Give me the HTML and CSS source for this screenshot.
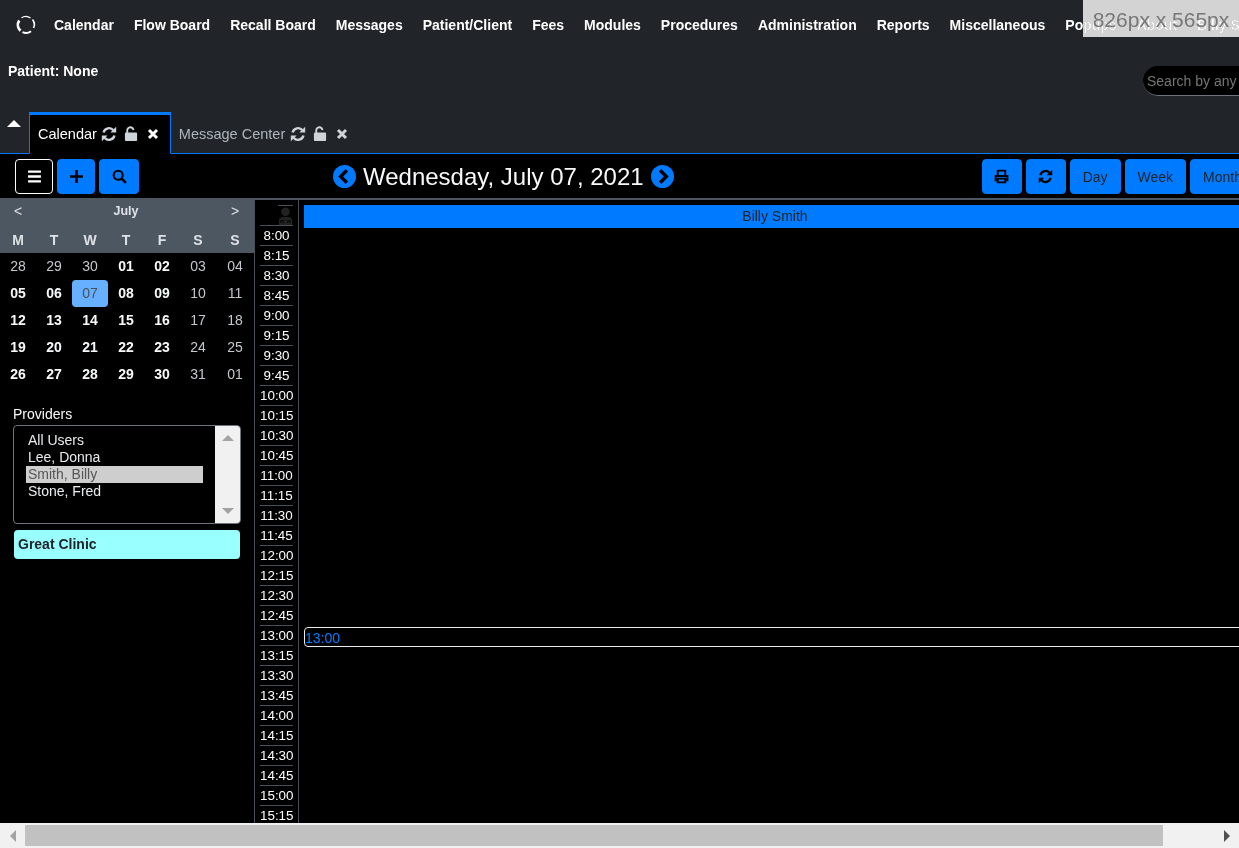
FILE: index.html
```html
<!DOCTYPE html>
<html lang="en">
<head>
  <meta charset="UTF-8" />
  <title>Calendar</title>
  <link rel="stylesheet" href="styles.css">
</head>
<body>
  <svg class="defs" width="0" height="0">
    <symbol id="i-sync" viewBox="0 0 16 16">
      <path d="M2.600 6.600A5.600 5.600 0 0 1 12.400 4.200" fill="none" stroke="currentColor" stroke-width="2.400"/>
      <path d="M15.200 0.800V6.600H9.400Z" fill="currentColor"/>
      <path d="M13.400 9.400A5.600 5.600 0 0 1 3.600 11.800" fill="none" stroke="currentColor" stroke-width="2.400"/>
      <path d="M0.800 15.200V9.400H6.600Z" fill="currentColor"/>
    </symbol>
    <symbol id="i-unlock" viewBox="0 0 14 16">
      <path d="M3 8V4.800A3.300 3.300 0 0 1 9.600 4.400" fill="none" stroke="currentColor" stroke-width="2"/>
      <rect x="0.500" y="7" width="13" height="9" rx="1.200" fill="currentColor"/>
    </symbol>
    <symbol id="i-close" viewBox="0 0 12 12">
      <path d="M2 2L10 10M10 2L2 10" fill="none" stroke="currentColor" stroke-width="3"/>
    </symbol>
    <symbol id="i-chev-left" viewBox="0 0 24 24">
      <circle cx="12" cy="12" r="12" fill="#007bff"/>
      <path d="M14.500 5.500L8 12l6.500 6.500" fill="none" stroke="#000" stroke-width="3.600"/>
    </symbol>
    <symbol id="i-chev-right" viewBox="0 0 24 24">
      <circle cx="12" cy="12" r="12" fill="#007bff"/>
      <path d="M9.500 5.500L16 12l-6.500 6.500" fill="none" stroke="#000" stroke-width="3.600"/>
    </symbol>
  </svg>

  <div class="app">
    <header class="topbar">
      <nav class="mainnav">
        <svg class="logo" viewBox="0 0 20 20">
          <path d="M3.200 5.600A8 8 0 0 0 4.500 15.800" fill="none" stroke="#fff" stroke-width="2.800"/>
          <path d="M6.500 17.200A8 8 0 0 0 15 16.200" fill="none" stroke="#fff" stroke-width="2"/>
          <path d="M17.500 13A8 8 0 0 0 16.500 4.500" fill="none" stroke="#fff" stroke-width="1.600"/>
          <path d="M14.500 3A8 8 0 0 0 5.500 2.800" fill="none" stroke="#fff" stroke-width="1.300"/>
        </svg>
        <a>Calendar</a>
        <a>Flow Board</a>
        <a>Recall Board</a>
        <a>Messages</a>
        <a>Patient/Client</a>
        <a>Fees</a>
        <a>Modules</a>
        <a>Procedures</a>
        <a>Administration</a>
        <a>Reports</a>
        <a>Miscellaneous</a>
        <a>Popups</a>
        <a>About</a>
        <a>Billy Smith</a>
      </nav>
      <div class="patientrow">
        <span class="patient">Patient: None</span>
        <input class="search" type="text" placeholder="Search by any demographics">
      </div>
      <div class="tabs">
        <span class="collapse"></span>
        <div class="tab active">
          <span>Calendar</span>
          <svg class="ic sync"><use href="#i-sync"/></svg>
          <svg class="ic lock"><use href="#i-unlock"/></svg>
          <svg class="ic close"><use href="#i-close"/></svg>
        </div>
        <div class="tab">
          <span>Message Center</span>
          <svg class="ic sync"><use href="#i-sync"/></svg>
          <svg class="ic lock"><use href="#i-unlock"/></svg>
          <svg class="ic close"><use href="#i-close"/></svg>
        </div>
      </div>
    </header>

    <div class="toolbar">
      <div class="tools-left">
        <button class="btn btn-outline">
          <svg class="btn-ic" viewBox="0 0 14 14"><path d="M1 2.500H13M1 7H13M1 11.500H13" fill="none" stroke="currentColor" stroke-width="2.200"/></svg>
        </button>
        <button class="btn">
          <svg class="btn-ic" viewBox="0 0 14 14"><path d="M7 1V13M1 7H13" fill="none" stroke="currentColor" stroke-width="2.400"/></svg>
        </button>
        <button class="btn btn-wide">
          <svg class="btn-ic" viewBox="0 0 14 14"><circle cx="5.800" cy="5.800" r="4.200" fill="none" stroke="currentColor" stroke-width="2"/><path d="M9 9L13 13" stroke="currentColor" stroke-width="2.400"/></svg>
        </button>
      </div>
      <div class="datenav">
        <svg class="chev"><use href="#i-chev-left"/></svg>
        <span class="datetitle">Wednesday, July 07, 2021</span>
        <svg class="chev"><use href="#i-chev-right"/></svg>
      </div>
      <div class="tools-right">
        <button class="btn btn-wide">
          <svg class="btn-ic" viewBox="0 0 14 14"><path d="M3.500 6V1.500H10.500V6M3.500 10.500H1.500V6.500H12.500V10.500H10.500M3.500 9H10.500V12.500H3.500Z" fill="none" stroke="currentColor" stroke-width="1.800"/></svg>
        </button>
        <button class="btn btn-wide">
          <svg class="btn-ic"><use href="#i-sync"/></svg>
        </button>
        <button class="btn btn-text">Day</button>
        <button class="btn btn-text">Week</button>
        <button class="btn btn-text">Month</button>
      </div>
    </div>

    <div class="content">
      <aside class="sidebar">
        <div class="cal-head">
          <div class="cal-row cal-title"><span>&lt;</span><span class="month">July</span><span class="next">&gt;</span></div>
          <div class="cal-row cal-days">
            <span>M</span><span>T</span><span>W</span><span>T</span><span>F</span><span>S</span><span>S</span>
          </div>
        </div>
        <div class="cal-grid">
          <span class="dim">28</span><span class="dim">29</span><span class="dim">30</span><span>01</span><span>02</span><span class="dim">03</span><span class="dim">04</span>
          <span>05</span><span>06</span><span class="today">07</span><span>08</span><span>09</span><span class="dim">10</span><span class="dim">11</span>
          <span>12</span><span>13</span><span>14</span><span>15</span><span>16</span><span class="dim">17</span><span class="dim">18</span>
          <span>19</span><span>20</span><span>21</span><span>22</span><span>23</span><span class="dim">24</span><span class="dim">25</span>
          <span>26</span><span>27</span><span>28</span><span>29</span><span>30</span><span class="dim">31</span><span class="dim">01</span>
        </div>
        <div class="providers">
          <div class="providers-label">Providers</div>
          <div class="listbox">
            <ul class="listbox-items">
              <li>All Users</li>
              <li>Lee, Donna</li>
              <li class="selected">Smith, Billy</li>
              <li>Stone, Fred</li>
            </ul>
            <div class="listbox-scroll"><i class="arrow-up"></i><i class="arrow-down"></i></div>
          </div>
          <div class="facility">Great Clinic</div>
        </div>
      </aside>

      <div class="times">
        <div class="time-head">
          <svg class="doctor" viewBox="0 0 16 20">
            <circle cx="8" cy="6" r="4.500" fill="#222"/>
            <path d="M1 20V15Q1 12 5 11.500H11Q15 12 15 15V20Z" fill="#222"/>
            <path d="M3 18V15.500H5.500V18M10.500 18V15.500H13V18" fill="none" stroke="#000" stroke-width="1"/>
          </svg>
        </div>
        <div class="time">8:00</div><div class="time">8:15</div><div class="time">8:30</div><div class="time">8:45</div>
        <div class="time">9:00</div><div class="time">9:15</div><div class="time">9:30</div><div class="time">9:45</div>
        <div class="time">10:00</div><div class="time">10:15</div><div class="time">10:30</div><div class="time">10:45</div>
        <div class="time">11:00</div><div class="time">11:15</div><div class="time">11:30</div><div class="time">11:45</div>
        <div class="time">12:00</div><div class="time">12:15</div><div class="time">12:30</div><div class="time">12:45</div>
        <div class="time">13:00</div><div class="time">13:15</div><div class="time">13:30</div><div class="time">13:45</div>
        <div class="time">14:00</div><div class="time">14:15</div><div class="time">14:30</div><div class="time">14:45</div>
        <div class="time">15:00</div><div class="time">15:15</div>
      </div>

      <main class="schedule">
        <div class="provider-bar">Billy Smith</div>
        <div class="slot-now">13:00</div>
      </main>
    </div>

    <div class="hscroll">
      <span class="hscroll-btn"><i class="arrow-left"></i></span>
      <div class="hscroll-track"><div class="hscroll-thumb"></div></div>
      <span class="hscroll-btn"><i class="arrow-right"></i></span>
    </div>
  </div>

  <div class="size-tip"><span>826px x 565px</span></div>
</body>
</html>
```

FILE: styles.css
```css
html, body { margin: 0; height: 100%; overflow: hidden; }
body { font-family: 'Liberation Sans', Arial, sans-serif; background: #000; color: #fff; font-size: 14px; }
.defs { position: absolute; }
.app { height: 848px; display: flex; flex-direction: column; overflow: hidden; }

/* top bar */
.topbar { height: 154px; flex: none; background: #212529; display: flex; flex-direction: column; }
.mainnav { height: 50px; flex: none; display: flex; align-items: center; gap: 20px; padding-left: 16px; white-space: nowrap; }
.mainnav a { font-weight: bold; font-size: 14px; color: #fff; flex: none; }
.logo { width: 20px; height: 20px; flex: none; margin-right: -2px; }
.patientrow { height: 62px; flex: none; display: flex; align-items: flex-start; padding-left: 8px; }
.patient { font-weight: bold; font-size: 14px; margin-top: 13px; line-height: 16px; }
.search { margin-left: auto; margin-right: -121px; margin-top: 16px; width: 217px; height: 30px; box-sizing: border-box; flex: none; background: #000; color: #fff; border: 0; border-bottom: 1px solid #6c757d; border-radius: 15px; padding: 0 4px; font: 14px 'Liberation Sans', Arial, sans-serif; }
.search::placeholder { color: #757575; opacity: 1; }

/* tabs */
.tabs { flex: 1; display: flex; align-items: stretch; border-bottom: 1px solid #007bff; padding-left: 7px; }
.collapse { width: 0; height: 0; margin-top: 8px; margin-right: 7px; border-left: 7.500px solid transparent; border-right: 7.500px solid transparent; border-bottom: 7px solid #fff; }
.tab { display: flex; align-items: center; padding: 0 8px 1px 7px; font-size: 14.500px; color: #adb5bd; border: 1px solid transparent; border-top-width: 3px; margin-bottom: -1px; }
.tab span { margin-right: 5px; }
.tab.active { background: #000; color: #fff; border-color: #007bff; border-bottom-color: #000; margin-left: 1px; padding-left: 8px; }
.tab.active span { margin-right: 4px; }
.ic { color: #ced4da; flex: none; }
.ic.sync { width: 16px; height: 16px; margin-right: 7px; }
.ic.lock { width: 14px; height: 15px; margin-right: 9px; }
.ic.close { width: 12px; height: 12px; margin-right: 3px; }
.tab.active .ic.close { color: #fff; }

/* toolbar */
.toolbar { height: 46px; flex: none; display: flex; align-items: center; border-bottom: 2px solid #4d5762; box-sizing: border-box; padding: 1px 0 0 15px; }
.tools-left, .tools-right { display: flex; gap: 4px; flex: none; }
.tools-right { margin-left: auto; margin-right: -16px; }
.btn { width: 38px; height: 35px; flex: none; border: 1px solid #007bff; border-radius: 4px; background: #007bff; color: #000; padding: 0; display: flex; align-items: center; justify-content: center; font: 14px 'Liberation Sans', Arial, sans-serif; }
.btn-outline { background: #000; border-color: #fff; color: #fff; }
.btn-wide { width: 40px; }
.btn-text { width: auto; padding: 0 12px; color: #212529; }
.btn-ic { width: 15px; height: 15px; }
.datenav { margin-left: 194px; display: flex; align-items: center; gap: 7px; flex: none; }
.chev { width: 23px; height: 23px; }
.datetitle { font-size: 24px; color: #f8f9fa; }

/* content area */
.content { flex: 1; min-height: 0; display: flex; overflow: hidden; }
.sidebar { width: 254px; flex: none; border-right: 1px solid #495057; }
.cal-head { background: #4d5762; height: 53px; }
.cal-row { display: grid; grid-template-columns: repeat(6, 36px) 38px; text-align: center; height: 27px; align-items: center; font-size: 14px; color: #dee2e6; }
.cal-title { padding-bottom: 4px; height: 22px; }
.month { grid-column: 4; font-weight: bold; font-size: 12.500px; }
.next { grid-column: 7; }
.cal-days { font-weight: bold; }
.cal-grid { display: grid; grid-template-columns: repeat(6, 36px) 38px; grid-auto-rows: 27px; text-align: center; font-weight: bold; font-size: 14px; color: #f8f9fa; }
.cal-grid span { line-height: 27px; }
.cal-grid .dim { font-weight: normal; color: #c4c8cc; }
.cal-grid .today { font-weight: normal; background: #66b0ff; color: #495057; border-radius: 4px; width: 36px; }

.providers { padding: 18px 13px 0 13px; }
.providers-label { font-size: 14px; line-height: 16px; color: #f8f9fa; margin-bottom: 3px; }
.listbox { height: 99px; width: 228px; box-sizing: border-box; border: 1px solid #6c757d; border-radius: 4px; display: flex; justify-content: space-between; overflow: hidden; }
.listbox-items { list-style: none; margin: 6px 0 0 12px; padding: 0; width: 177px; font-size: 14px; line-height: 17px; color: #e9ecef; }
.listbox-items li { padding-left: 2px; }
.listbox-items .selected { background: #cecece; color: #555; }
.listbox-scroll { width: 25px; background: #f1f1f1; display: flex; flex-direction: column; justify-content: space-between; align-items: center; padding: 9px 0 9px; box-sizing: border-box; }
.arrow-up { width: 0; height: 0; border: 6px solid transparent; border-top: 0; border-bottom: 6px solid #a3a3a3; }
.arrow-down { width: 0; height: 0; border: 6px solid transparent; border-bottom: 0; border-top: 6px solid #a3a3a3; }
.facility { margin: 6px 1px 0 1px; width: 226px; height: 29px; line-height: 28px; box-sizing: border-box; padding-left: 4px; background: #99ffff; color: #212529; font-weight: bold; font-size: 14px; border-radius: 4px; }

/* time column */
.times { width: 44px; flex: none; border-right: 1px solid #495057; padding: 5px 5px 0 5px; box-sizing: border-box; }
.time-head { height: 20px; display: flex; justify-content: flex-end; }
.doctor { width: 15px; height: 20px; box-sizing: border-box; border-top: 1px solid #495057; }
.time { height: 20px; line-height: 19px; border-top: 1px solid #495057; box-sizing: border-box; text-align: center; font-size: 13.400px; color: #fff; white-space: nowrap; }

/* schedule */
.schedule { flex: 1; min-width: 0; padding: 5px 0 0 5px; overflow: hidden; }
.provider-bar { width: 942px; height: 23px; line-height: 22px; background: #007bff; color: #212529; text-align: center; font-size: 14px; box-sizing: border-box; }
.slot-now { margin-top: 399px; width: 950px; height: 20px; line-height: 21px; box-sizing: border-box; border: 1px solid #e9ecef; border-radius: 4px; color: #007bff; font-size: 14px; }

/* bottom scrollbar */
.hscroll { height: 25px; flex: none; background: #f1f1f1; display: flex; align-items: center; }
.hscroll-btn { width: 25px; flex: none; display: flex; justify-content: center; }
.hscroll-track { flex: 1; height: 21px; }
.hscroll-thumb { width: 1138px; height: 100%; background: #c1c1c1; }
.arrow-left { width: 0; height: 0; border: 6px solid transparent; border-left: 0; border-right: 6px solid #a3a3a3; }
.arrow-right { width: 0; height: 0; border: 6px solid transparent; border-right: 0; border-left: 6px solid #505050; }

/* window size tip from the browser's dev tools, the nav text shows through it */
.size-tip { position: absolute; top: 0; right: 0; width: 156px; height: 37px; line-height: 40px; color: #777; font-size: 21px; text-align: center; white-space: nowrap; overflow: hidden; }
.size-tip::before { content: ""; position: absolute; inset: 0; background: #d3d3d3; mix-blend-mode: lighten; }
.size-tip span { position: relative; }
```
